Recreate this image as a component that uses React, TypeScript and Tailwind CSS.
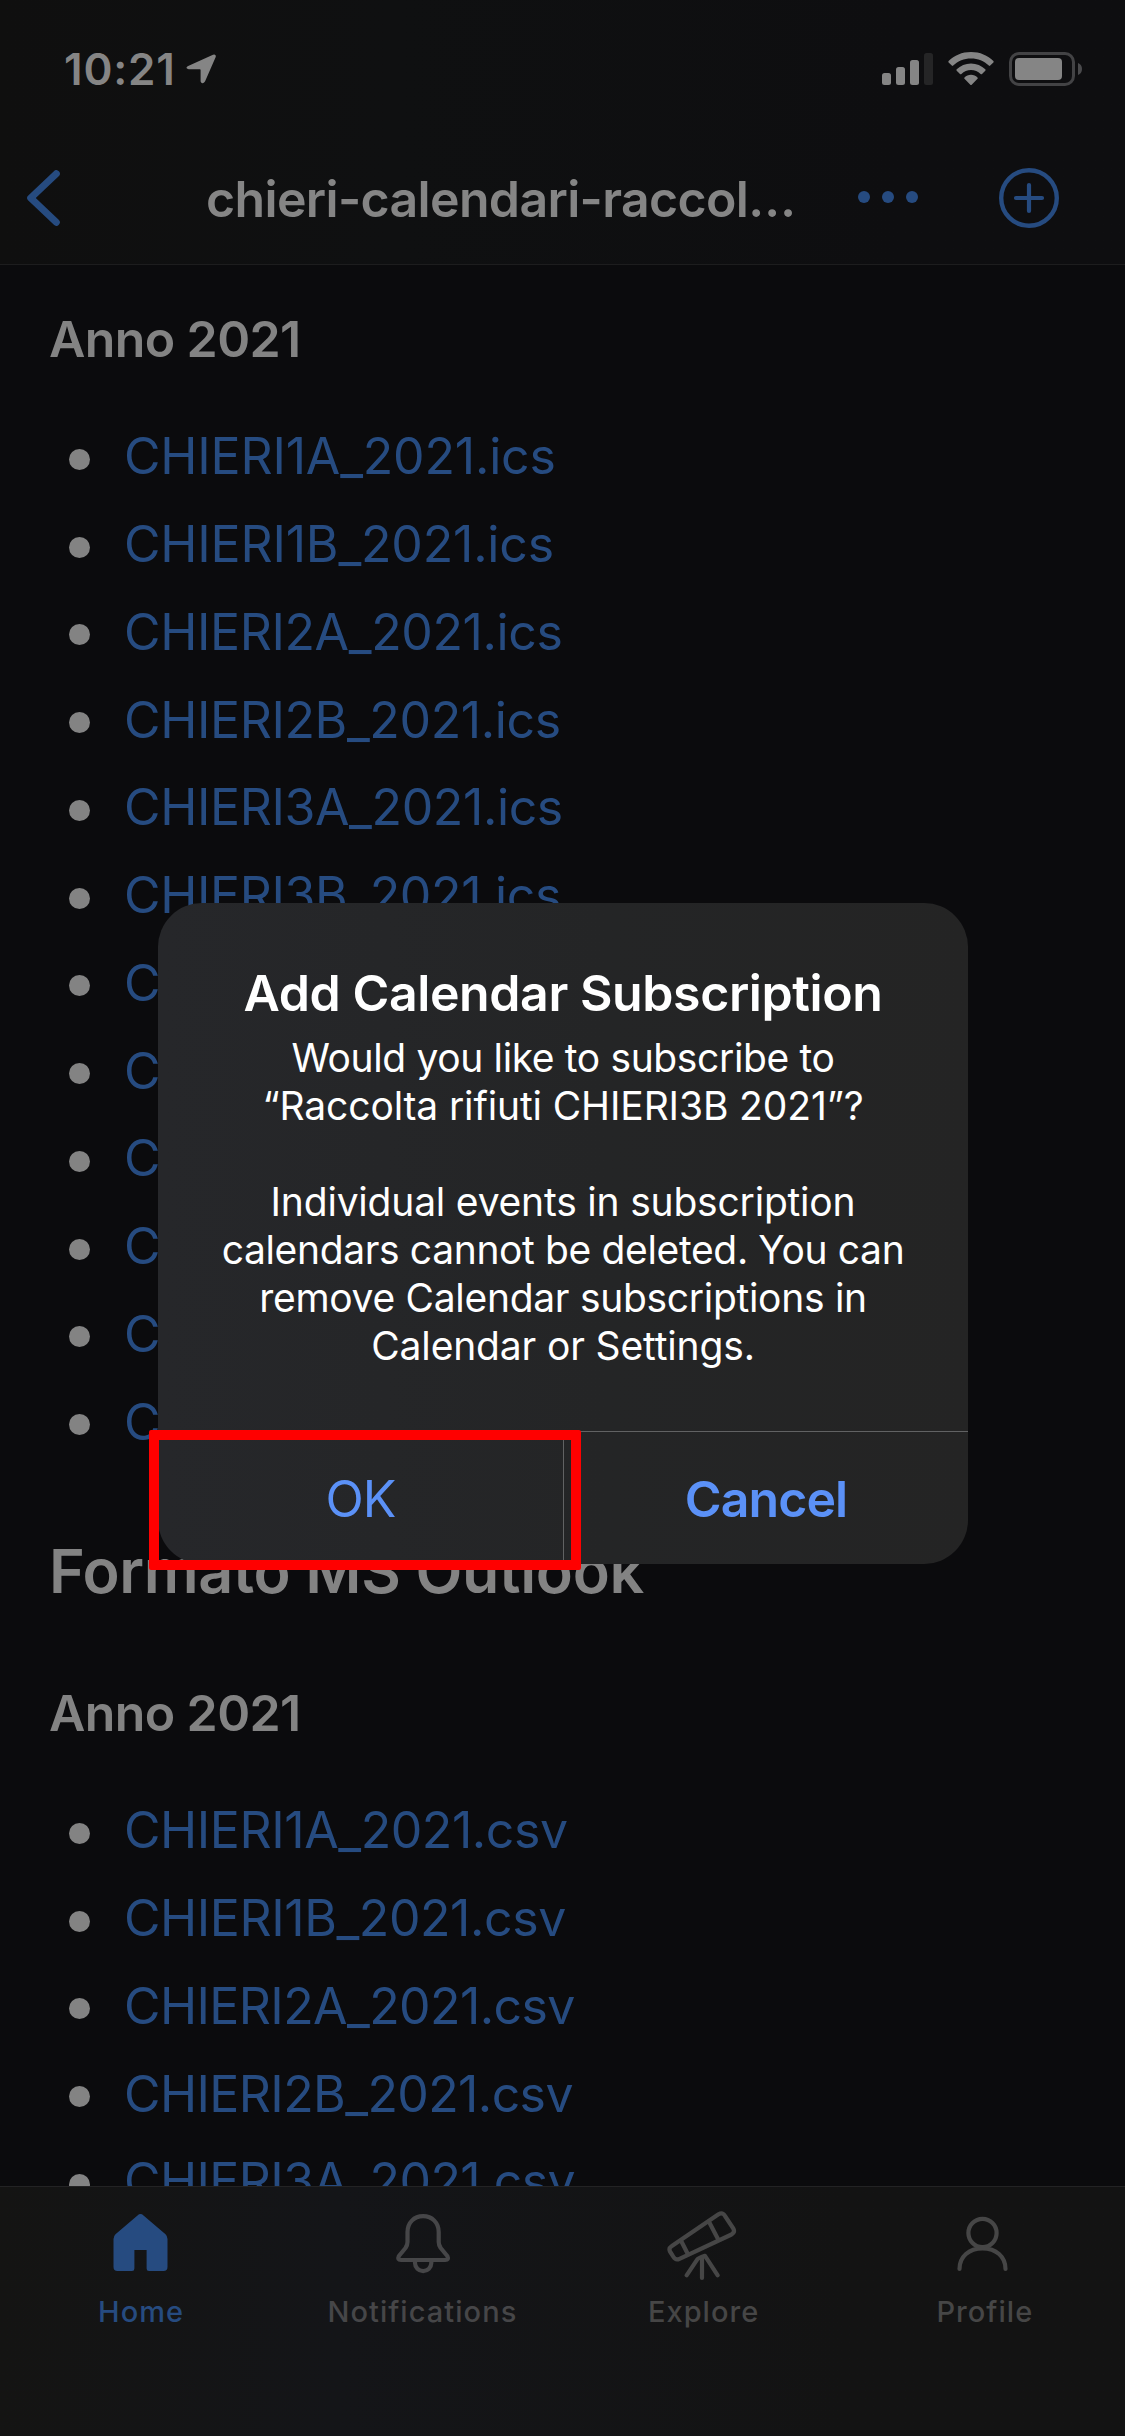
import type { ReactNode } from 'react';

type LinkItem = { name: string; tracking: string };

const ICS_NARROW = 'tracking-[-0.18px]';
const ICS_WIDE = 'tracking-[-0.38px]';
const CSV_NARROW = 'tracking-[-0.42px]';
const CSV_WIDE = 'tracking-[-0.6px]';

const icsFiles: LinkItem[] = [
  { name: 'CHIERI1A_2021.ics', tracking: ICS_NARROW },
  { name: 'CHIERI1B_2021.ics', tracking: ICS_NARROW },
  { name: 'CHIERI2A_2021.ics', tracking: ICS_WIDE },
  { name: 'CHIERI2B_2021.ics', tracking: ICS_WIDE },
  { name: 'CHIERI3A_2021.ics', tracking: ICS_WIDE },
  { name: 'CHIERI3B_2021.ics', tracking: ICS_WIDE },
];

// Rows whose names continue behind the dialog.
const coveredRows = ['4A', '4B', '5A', '5B', '6A', '6B'];

const csvFiles: LinkItem[] = [
  { name: 'CHIERI1A_2021.csv', tracking: CSV_NARROW },
  { name: 'CHIERI1B_2021.csv', tracking: CSV_NARROW },
  { name: 'CHIERI2A_2021.csv', tracking: CSV_WIDE },
  { name: 'CHIERI2B_2021.csv', tracking: CSV_WIDE },
  { name: 'CHIERI3A_2021.csv', tracking: CSV_WIDE },
];

function StatusBar() {
  return (
    <div className="flex h-[132px] items-center pt-[6px] pr-[42px] pl-[64px] text-[#858585]">
      <span className="text-[44px] leading-[60px] font-semibold tracking-[0.8px]">10:21</span>
      <svg className="ml-[10px] h-[30px] w-[30px]" viewBox="0 0 30 30" fill="currentColor">
        <path d="M1.6 12.2 L27 .7 Q30.3 -.2 29.7 3 L19 27.6 Q16.4 31.2 14.6 27.4 V16 Q14.6 15.3 13.9 15.3 H2.6 Q-1.2 14.4 1.6 12.2Z" />
      </svg>
      <div className="ml-auto flex items-center gap-[15px]">
        <svg className="h-[34px] w-[51px]" viewBox="0 0 51 34" fill="currentColor">
          <rect x="0" y="21" width="9" height="12" rx="2.5" />
          <rect x="14" y="15" width="9" height="18" rx="2.5" />
          <rect x="28" y="8" width="9" height="25" rx="2.5" />
          <rect x="42" y="1" width="9" height="32" rx="2.5" fill="#252526" />
        </svg>
        <svg className="h-[34px] w-[46px]" viewBox="0 0 46 34" fill="currentColor">
          <path d="M23 0 C14 0 6.3 3.4 .6 9 Q0 9.7 .6 10.4 L3.8 13.6 Q4.5 14.2 5.2 13.6 C10 9 16 6.6 23 6.6 S36 9 40.8 13.6 Q41.5 14.2 42.2 13.6 L45.4 10.4 Q46 9.7 45.4 9 C39.7 3.4 32 0 23 0Z" />
          <path d="M23 11.4 C17.5 11.4 12.4 13.6 8.7 17.3 Q8 18 8.7 18.7 L12 22 Q12.7 22.6 13.4 22 C16 19.4 19.3 18 23 18 S30 19.4 32.6 22 Q33.3 22.6 34 22 L37.3 18.7 Q38 18 37.3 17.3 C33.6 13.6 28.5 11.4 23 11.4Z" />
          <path d="M23 22.8 C20.4 22.8 18.2 23.8 16.5 25.4 Q15.8 26.1 16.5 26.8 L22.3 32.7 Q23 33.3 23.7 32.7 L29.5 26.8 Q30.2 26.1 29.5 25.4 C27.8 23.8 25.6 22.8 23 22.8Z" />
        </svg>
        <svg className="h-[34px] w-[74px]" viewBox="0 0 74 34">
          <rect x="1.5" y="1.5" width="63" height="31" rx="8.5" fill="none" stroke="#434345" strokeWidth="3" />
          <rect x="6" y="6" width="47" height="22" rx="4" fill="currentColor" />
          <path d="M69 11 Q73 12.5 73 17 T69 23Z" fill="#4a4a4c" />
        </svg>
      </div>
    </div>
  );
}

function NavBar() {
  return (
    <div className="flex h-[132px] items-center pl-[27px] text-[#264b80]">
      <svg className="h-[56px] w-[33px]" viewBox="0 0 33 56" fill="none" stroke="currentColor" strokeWidth="7" strokeLinecap="round" strokeLinejoin="round">
        <path d="M29.3 3.7 L3.7 28 L29.3 52.3" />
      </svg>
      <h1 className="mt-[2px] ml-[146px] w-[590px] text-[50px] leading-[60px] font-semibold tracking-[-0.65px] whitespace-nowrap text-[#858585]">
        chieri-calendari-raccol…
      </h1>
      <svg className="mb-[2px] ml-[62px] h-[12px] w-[60px]" viewBox="0 0 60 12" fill="currentColor">
        <circle cx="6" cy="6" r="6" />
        <circle cx="30" cy="6" r="6" />
        <circle cx="54" cy="6" r="6" />
      </svg>
      <svg className="ml-[81px] h-[60px] w-[60px]" viewBox="0 0 60 60" fill="none" stroke="currentColor" strokeLinecap="round">
        <circle cx="30" cy="30" r="27.8" strokeWidth="4.4" />
        <path d="M30 17 V43 M17 30 H43" strokeWidth="4.2" />
      </svg>
    </div>
  );
}

function FileRow({ name, tracking }: LinkItem) {
  return (
    <li className="flex h-[87.75px] items-center">
      <span className="mt-[7px] ml-[20px] h-[21px] w-[21px] rounded-full bg-[#838383]" />
      <a className={`mt-[1px] ml-[34px] text-[50px] leading-[60px] text-[#264b80] ${tracking}`}>{name}</a>
    </li>
  );
}

function YearHeading() {
  return <h3 className="text-[50px] leading-[60px] font-semibold tracking-[-0.6px]">Anno 2021</h3>;
}

function TabItem({ label, className, children }: { label: string; className: string; children: ReactNode }) {
  return (
    <div className={`flex flex-1 flex-col items-center pt-[23px] ${className}`}>
      <svg className="h-[72px] w-[72px]" viewBox="0 0 72 72" fill="none" stroke="currentColor" strokeWidth="4.2" strokeLinecap="round" strokeLinejoin="round">
        {children}
      </svg>
      <span className="mt-[12px] ml-[1px] text-[29px] leading-[36px] font-medium tracking-[1.05px]">{label}</span>
    </div>
  );
}

function TabBar() {
  return (
    <nav className="flex h-[250px] shrink-0 border-t border-[#232324] bg-linear-to-r from-[#141413] via-[#141518] via-30% to-[#131313] to-75%">
      <TabItem label="Home" className="text-[#264b80]">
        <path
          fill="currentColor"
          stroke="none"
          d="M32.5 5.4 Q35.5 2.8 38.5 5.4 L60.5 24.3 Q62.5 26.2 62.5 29 V57 Q62.5 61 58.5 61 H44 Q41.6 61 41.6 58.5 V40 H29.4 V58.5 Q29.4 61 27 61 H12.5 Q8.5 61 8.5 57 V29 Q8.5 26.2 10.5 24.3Z"
        />
      </TabItem>
      <TabItem label="Notifications" className="text-[#464648]">
        <path d="M37.1 6.2 C28 6.2 21.5 12.7 21.5 22 V32 Q21.5 35 19.5 38 L12.9 46 Q11 50 15 50 H59.2 Q63.2 50 61.3 46 L54.7 38 Q52.7 35 52.7 32 V22 C52.7 12.7 46.2 6.2 37.1 6.2Z" />
        <path strokeLinecap="butt" d="M29 51 V53 a8.1 8 0 0 0 16.3 0 V51" />
      </TabItem>
      <TabItem label="Explore" className="text-[#464646]">
        <path d="M4.5 36.2 L51.5 4.3 Q55.5 1.9 58 6 L66.3 18.5 Q68.3 22.3 64.5 24.5 L12.5 48.8 Q8.7 50.6 6.5 47 L3 41.5 Q1.4 38.2 4.5 36.2Z" />
        <path d="M42.1 12 L51.5 30 M14.2 31 L20.8 44" />
        <path d="M19.6 65.3 L30.3 49.3 Q31 48.3 38 45.8 L50.7 65.3 M35 47.5 V68" />
      </TabItem>
      <TabItem label="Profile" className="text-[#464646]">
        <circle cx="34.5" cy="23" r="14.1" />
        <path d="M11.5 59 C11.5 46.5 21 38.3 34.5 38.3 S57.5 46.5 57.5 59" />
      </TabItem>
    </nav>
  );
}

function SubscriptionDialog() {
  return (
    <div className="absolute top-[903px] left-[158px] flex h-[661px] w-[810px] flex-col overflow-hidden rounded-[44px] bg-linear-to-r from-[#26272a] via-[#242526] via-55% to-[#242424] text-white">
      <div className="h-[528px] pt-[60px] text-center">
        <h2 className="text-[50px] leading-[60px] font-semibold tracking-[-0.41px]">Add Calendar Subscription</h2>
        <p className="mt-[11px] text-[39px] leading-[48px] whitespace-nowrap">
          <span className="block tracking-[-0.37px]">Would you like to subscribe to</span>
          <span className="block tracking-[-0.13px]">“Raccolta rifiuti CHIERI3B 2021”?</span>
          <span className="mt-[48px] block tracking-[-0.2px]">Individual events in subscription</span>
          <span className="block tracking-[-0.36px]">calendars cannot be deleted. You can</span>
          <span className="block tracking-[-0.3px]">remove Calendar subscriptions in</span>
          <span className="block tracking-[-0.15px]">Calendar or Settings.</span>
        </p>
      </div>
      <div className="flex h-[133px] border-t border-[#616263] text-[50px] leading-[60px] text-[#5b91f7]">
        <button className="w-[406px] border-r border-[#616263] pt-[2px] tracking-[-1px]">OK</button>
        <button className="flex-1 pt-[2px] font-semibold tracking-[-0.9px]">Cancel</button>
      </div>
    </div>
  );
}

export default function App() {
  return (
    <div className="relative flex h-[2436px] w-[1125px] flex-col overflow-hidden bg-[#0b0b0d] font-['Inter',sans-serif]">
      <header className="h-[265px] shrink-0 border-b border-[#1d1d1e] bg-linear-to-r from-[#0f0f0f] via-[#0f1011] via-35% to-[#0e0e10] to-80%">
        <StatusBar />
        <NavBar />
      </header>
      <main className="h-[1921px] shrink-0 overflow-hidden pt-[44px] pl-[49px] text-[#838383]">
        <YearHeading />
        <ul className="mt-[43px]">
          {icsFiles.map((file) => (
            <FileRow key={file.name} {...file} />
          ))}
          {coveredRows.map((row) => (
            <FileRow key={row} name="C" tracking={ICS_WIDE} />
          ))}
        </ul>
        <h2 className="mt-[70px] mb-[76px] text-[61px] leading-[72px] font-semibold tracking-[-0.37px]">Formato MS Outlook</h2>
        <YearHeading />
        <ul className="mt-[43px]">
          {csvFiles.map((file) => (
            <FileRow key={file.name} {...file} />
          ))}
        </ul>
      </main>
      <TabBar />
      <SubscriptionDialog />
      <div className="absolute top-[1430px] left-[149px] h-[140px] w-[432px] rounded-[2px] border-[10px] border-[#ff0000]" />
    </div>
  );
}
